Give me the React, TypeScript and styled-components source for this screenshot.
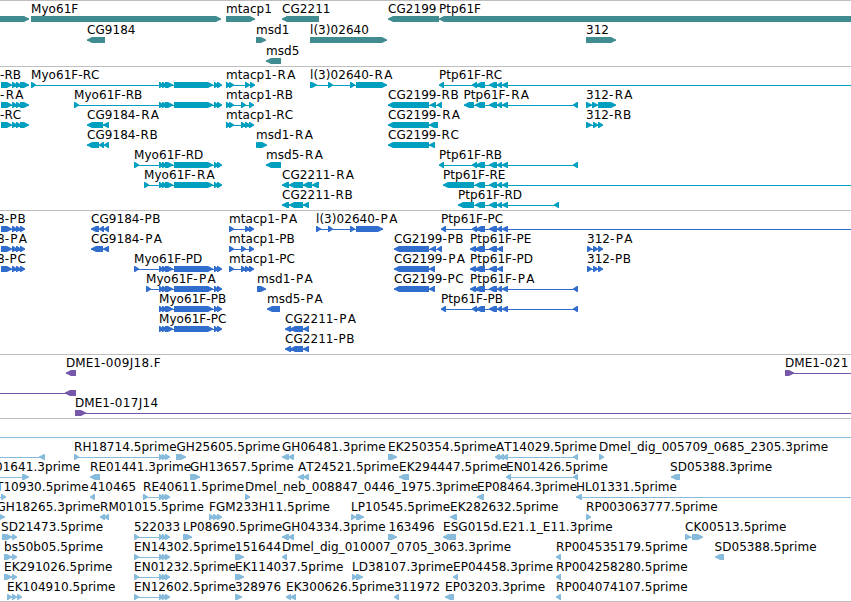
import React from "react";
import styled, { createGlobalStyle } from "styled-components";

type Span = [number, number];
type Direction = "f" | "r";
interface Feature {
  dir: Direction;
  exons: Span[];
  from: number;
  to: number;
}
type Label = [number, string];
interface RowData {
  labels: Label[];
  features: Feature[];
}

const VIEW = 851;
const BEYOND = 861;

const feature = (dir: Direction, exons: Span[], to?: number, from?: number): Feature => ({
  dir,
  exons,
  from: from ?? exons[0][0],
  to: to ?? exons[exons.length - 1][1],
});
const f = (...exons: Span[]) => feature("f", exons);
const r = (...exons: Span[]) => feature("r", exons);
const row = (labels: Label[], ...features: Feature[]): RowData => ({ labels, features });

const myoTail: Span[] = [[159, 163], [162, 167], [165, 173], [174, 213], [214, 218], [217, 222]];
const myo = (start?: number) => f(...(start ? [[start, start + 5] as Span] : []), ...myoTail);
const ptpMid: Span[] = [[489, 497], [497, 502], [502, 508]];
const ptpLast: Span = [573, 578];
const cutRna = f([1, 12], [12, 17], [16, 21], [20, 29]);
const cutProtein = f([1, 12], [12, 17], [16, 21], [20, 25]);
const est = (start: number) => f([start, start + 5], [159, 163], [162, 166], [165, 170]);

const genes: RowData[] = [
  row(
    [[31, "Myo61F"], [226, "mtacp1"], [282, "CG2211"], [388, "CG2199"], [439, "Ptp61F"]],
    f([-10, 29]), f([31, 221]), f([226, 255]), r([282, 319]), r([388, 439]), r([439, BEYOND]),
  ),
  row(
    [[87, "CG9184"], [256, "msd1"], [310, "l(3)02640"], [586, "312"]],
    r([87, 105]), f([256, 266]), f([310, 387]), f([586, 616]),
  ),
  row([[266, "msd5"]], r([266, 281])),
];

const transcripts: RowData[] = [
  row(
    [[0, "-RB"], [31, "Myo61F-RC"], [226, "mtacp1-RA"], [310, "l(3)02640-RA"], [439, "Ptp61F-RC"]],
    cutRna, myo(31), f([226, 230], [229, 234], [245, 250], [250, 255]),
    f([310, 317], [328, 333], [350, 355], [356, 387]),
    feature("r", [[439, 444], [472, 477], [476, 485], ...ptpMid], BEYOND),
  ),
  row(
    [[0, "-RA"], [74, "Myo61F-RB"], [226, "mtacp1-RB"], [388, "CG2199-RB"], [463.5, "Ptp61F-RA"], [586, "312-RA"]],
    cutRna, myo(74), f([226, 230], [229, 234], [241, 246], [249, 254]),
    r([388, 429], [430, 436], [437, 442]),
    r([464, 474], [475, 485], ...ptpMid, ptpLast),
    f([586, 592], [592, 598], [598, 616]),
  ),
  row(
    [[0, "-RC"], [87, "CG9184-RA"], [226, "mtacp1-RC"], [388, "CG2199-RA"], [586, "312-RB"]],
    cutRna, r([87, 103], [103, 109]), f([226, 230], [229, 234], [241, 246], [245, 250], [249, 254]),
    r([388, 429], [429, 438]), f([586, 592], [593, 598], [598, 603]),
  ),
  row(
    [[87, "CG9184-RB"], [256, "msd1-RA"], [388, "CG2199-RC"]],
    r([87, 99], [99, 104], [104, 109]), f([256, 261], [258, 267]), r([388, 429], [429, 435]),
  ),
  row(
    [[134, "Myo61F-RD"], [266, "msd5-RA"], [439, "Ptp61F-RB"]],
    myo(134), r([266, 281]), r([439, 444], [472, 477], [476, 485], ...ptpMid, ptpLast),
  ),
  row(
    [[144, "Myo61F-RA"], [282, "CG2211-RA"], [443, "Ptp61F-RE"]],
    myo(144), r([282, 289], [289, 303], [303, 312], [312, 319]),
    feature("r", [[443, 474], [475, 485], ...ptpMid], BEYOND),
  ),
  row(
    [[282, "CG2211-RB"], [458, "Ptp61F-RD"]],
    r([282, 289], [289, 303], [303, 309]), r([458, 474], [475, 485], ...ptpMid, [554, 559]),
  ),
];

const proteins: RowData[] = [
  row(
    [[-3, "8-PB"], [91, "CG9184-PB"], [229, "mtacp1-PA"], [316, "l(3)02640-PA"], [441, "Ptp61F-PC"]],
    cutProtein, r([91, 99], [99, 104], [104, 109]), f([229, 234], [245, 250], [249, 254]),
    f([316, 321], [328, 333], [350, 355], [356, 383]),
    feature("r", [[441, 446], [472, 477], [476, 485], ...ptpMid], BEYOND),
  ),
  row(
    [[-3, "8-PA"], [91, "CG9184-PA"], [229, "mtacp1-PB"], [394, "CG2199-PB"], [470, "Ptp61F-PE"], [587, "312-PA"]],
    cutProtein, r([91, 103], [103, 109]), f([229, 234], [241, 246], [249, 254]),
    r([394, 429], [430, 436], [437, 442]), r([470, 476], [475, 485], [489, 497], [497, 503]),
    f([587, 592], [593, 598], [598, 603]),
  ),
  row(
    [[-3, "8-PC"], [134, "Myo61F-PD"], [229, "mtacp1-PC"], [394, "CG2199-PA"], [470, "Ptp61F-PD"], [587, "312-PB"]],
    cutProtein, myo(134), f([229, 234], [241, 246], [245, 250], [249, 254]),
    r([394, 429], [429, 435]), r([470, 476], [475, 485], [489, 497], [497, 503]),
    f([587, 592], [593, 598], [598, 603]),
  ),
  row(
    [[146, "Myo61F-PA"], [257, "msd1-PA"], [394, "CG2199-PC"], [470, "Ptp61F-PA"]],
    myo(146), f([257, 266]), r([394, 429], [429, 435]), r([470, 476], [475, 485], ...ptpMid, ptpLast),
  ),
  row(
    [[159, "Myo61F-PB"], [267, "msd5-PA"], [441, "Ptp61F-PB"]],
    myo(), r([267, 280]), r([441, 446], [472, 477], [476, 485], ...ptpMid, ptpLast),
  ),
  row([[159, "Myo61F-PC"], [285, "CG2211-PA"]], myo(), r([285, 291], [290, 303], [303, 309])),
  row([[285, "CG2211-PB"]], r([285, 291], [290, 303], [303, 309])),
];

const clones: RowData[] = [
  row([[66, "DME1-009J18.F"], [785, "DME1-021"]], r([66, 76]), feature("f", [[785, 794]], BEYOND)),
  row([], feature("r", [[65, 76]], 76, -10)),
  row([[75, "DME1-017J14"]], feature("f", [[75, 86]], BEYOND)),
];

const reads: RowData[] = [
  row(
    [[74, "RH18714.5prime"], [176.5, "GH25605.5prime"], [282, "GH06481.3prime"], [388, "EK250354.5prime"], [496, "AT14029.5prime"], [599, "Dmel_dig_005709_0685_2305.3prime"]],
    feature("r", [[39, 45]], 45, -10), est(74), f([176, 186]), r([282, 289], [288, 294]), f([388, 397]),
    r([495, 500], [499, 504], [503, 508], ptpLast), f([599, 604]),
  ),
  row(
    [[-5, "01641.3prime"], [90, "RE01441.3prime"], [190, "GH13657.5prime"], [298, "AT24521.5prime"], [399, "EK294447.5prime"], [506, "EN01426.5prime"], [670, "SD05388.3prime"]],
    feature("f", [[22, 29]], 29, -10), r([90, 100]), f([190, 200]), r([298, 304], [303, 309]), r([399, 409]),
    r([506, 511], ptpLast), r([671, 680]),
  ),
  row(
    [[-4, "T10930.5prime"], [90, "410465"], [143, "RE40611.5prime"], [245, "Dmel_neb_008847_0446_1975.3prime"], [477, "EP08464.3prime"], [576, "HL01331.5prime"]],
    feature("f", [[1, 6]], 6, -10), r([90, 95]), est(143), f([245, 250]), r([477, 484]),
    feature("r", [[576, 582]], BEYOND),
  ),
  row(
    [[-3.5, "GH18265.3prime"], [100, "RM01015.5prime"], [209, "FGM233H11.5prime"], [351, "LP10545.5prime"], [450, "EK282632.5prime"], [586, "RP003063777.5prime"]],
    f([-4, 5]), r([100, 105], [104, 109]), f([209, 214], [213, 218], [217, 222]), f([351, 356], [356, 364]),
    r([450, 457]), f([586, 591]),
  ),
  row(
    [[1, "SD21473.5prime"], [134, "522033"], [183, "LP08690.5prime"], [282, "GH04334.3prime"], [388.5, "163496"], [443, "ESG015d.E21.1_E11.3prime"], [685, "CK00513.5prime"]],
    f([2, 12], [12, 17]), est(134), f([183, 192]), r([282, 289], [288, 294]), f([388, 397]), r([443, 456]),
    f([685, 691], [692, 703]),
  ),
  row(
    [[4, "bs50b05.5prime"], [134, "EN14302.5prime"], [235, "151644"], [282, "Dmel_dig_010007_0705_3063.3prime"], [556, "RP004535179.5prime"], [714.5, "SD05388.5prime"]],
    f([4, 12], [12, 17]), est(134), f([235, 244]), r([282, 287]), r([556, 561]), r([715, 724]),
  ),
  row(
    [[4, "EK291026.5prime"], [134, "EN01232.5prime"], [235, "EK114037.5prime"], [352, "LD38107.3prime"], [453, "EP04458.3prime"], [556, "RP004258280.5prime"]],
    f([4, 12], [12, 17]), est(134), f([235, 244]), f([352, 357], [356, 363]), r([453, 458]), r([556, 561]),
  ),
  row(
    [[7, "EK104910.5prime"], [134, "EN12602.5prime"], [235, "328976"], [286, "EK300626.5prime"], [394, "311972"], [445, "EP03203.3prime"], [556, "RP004074107.5prime"]],
    f([7, 12], [12, 17], [17, 22]), est(134), f([235, 242]), r([286, 291], [290, 296]), r([394, 399]), r([445, 454]),
    r([556, 561]),
  ),
];

const GlobalStyle = createGlobalStyle`
  body {
    margin: 0;
    background: #fff;
    overflow: hidden;
  }
`;

const Browser = styled.main`
  display: flex;
  flex-direction: column;
  width: 851px;
  height: 602px;
  overflow: hidden;
  background: #fff;
  color: #000;
  font: 12px/14px "DejaVu Sans", sans-serif;
  font-kerning: none;
  letter-spacing: 0.05px;
`;

const Track = styled.section<{ $color: string; $end: number }>`
  flex: none;
  border-top: 1px solid #bebebe;
  padding-bottom: ${(p) => p.$end}px;
  color: ${(p) => p.$color};
`;

const TrackRow = styled.div<{ $height: number }>`
  display: flex;
  flex-direction: column;
  position: relative;
  height: ${(p) => p.$height}px;
  padding-top: 15px;
  box-sizing: border-box;
`;

const FeatureLabel = styled.span`
  position: absolute;
  top: 1px;
  color: #000;
  white-space: pre;
`;

const Suffix = styled.span<{ $spacing: number }>`
  letter-spacing: ${(p) => p.$spacing}px;
`;

const Glyphs = styled.svg`
  display: block;
  flex: none;
  width: 851px;
  height: 6px;
`;

const Overflow = styled.div`
  height: 1px;
  margin: 18px 0 1px;
  background: currentColor;
`;

const Rule = styled.div`
  flex: none;
  height: 1px;
  background: #bebebe;
`;

function arrow([start, end]: Span, dir: Direction) {
  const head = Math.min(end - start, 6);
  return dir === "f"
    ? `M${start} 0H${end - head + 1}L${end} 2.4V3.6L${end - head + 1} 6H${start}Z`
    : `M${end} 0H${start + head - 1}L${start} 2.4V3.6L${start + head - 1} 6H${end}Z`;
}

function suffixSpacing(text: string) {
  if (text.startsWith("DME")) return 0.35;
  if (text.endsWith("A")) return 1.3;
  return /^(CG|312|8)/.test(text) ? 0.6 : 0.05;
}

function LabelText({ text }: { text: string }) {
  const dash = text.indexOf("-");
  if (dash < 0) return <>{text}</>;
  return (
    <>
      {text.slice(0, dash)}
      <Suffix $spacing={suffixSpacing(text)}>{text.slice(dash)}</Suffix>
    </>
  );
}

function FeatureRow({ data, height }: { data: RowData; height: number }) {
  return (
    <TrackRow $height={height}>
      <Glyphs viewBox={`0 0 ${VIEW} 6`} fill="currentColor">
        {data.features.map((item, i) => (
          <g key={i}>
            <rect x={item.from} y={3} width={item.to - item.from} height={1} />
            <path d={item.exons.map((e) => arrow(e, item.dir)).join("")} />
          </g>
        ))}
      </Glyphs>
      {data.labels.map(([x, text]) => (
        <FeatureLabel key={text} style={{ left: x }}>
          <LabelText text={text} />
        </FeatureLabel>
      ))}
    </TrackRow>
  );
}

interface TrackProps {
  rows: RowData[];
  color: string;
  rowHeight?: number;
  end?: number;
  overflow?: boolean;
}

function FeatureTrack({ rows, color, rowHeight = 20, end = 3, overflow }: TrackProps) {
  return (
    <Track $color={color} $end={end}>
      {overflow && <Overflow />}
      {rows.map((data, i) => (
        <FeatureRow key={i} data={data} height={rowHeight} />
      ))}
    </Track>
  );
}

export default function App() {
  return (
    <>
      <GlobalStyle />
      <Browser>
        <FeatureTrack rows={genes} color="#408c91" rowHeight={21} end={2} />
        <FeatureTrack rows={transcripts} color="#009fc0" />
        <FeatureTrack rows={proteins} color="#316dcd" />
        <FeatureTrack rows={clones} color="#7757a9" />
        <FeatureTrack rows={reads} color="#86bbdc" end={2} overflow />
        <Rule />
      </Browser>
    </>
  );
}
